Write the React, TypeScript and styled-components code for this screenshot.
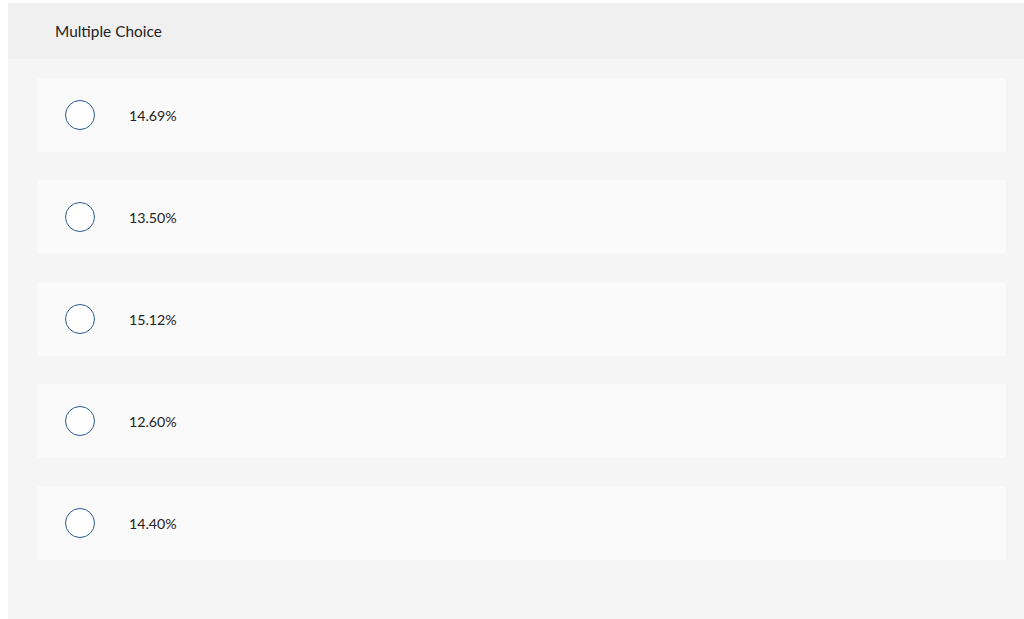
import React from "react";
import styled, { createGlobalStyle } from "styled-components";

const GlobalStyle = createGlobalStyle`
  html, body {
    margin: 0;
    padding: 0;
    background: #ffffff;
    font-family: Lato, "Open Sans", "Liberation Sans", sans-serif;
  }
`;

const Page = styled.div`
  padding: 3px 0 0 8px;
`;

const Panel = styled.div`
  background: #f5f5f5;
  height: 616px;
  display: flex;
  flex-direction: column;
`;

const Header = styled.div`
  height: 56px;
  background: #f0f0f0;
  display: flex;
  align-items: center;
  padding-left: 47px;
  font-size: 15.4px;
  color: #222222;
`;

const Choices = styled.div`
  display: flex;
  flex-direction: column;
  gap: 28px;
  padding: 19px 18px 0 29px;
`;

const Choice = styled.label`
  height: 74px;
  background: #fafafa;
  border-radius: 3px;
  display: flex;
  align-items: center;
  padding-left: 28px;
  gap: 34px;
  cursor: pointer;
`;

const Radio = styled.span`
  width: 28px;
  height: 28px;
  border-radius: 50%;
  border: 1.6px solid #2a5a90;
  background: #ffffff;
  flex-shrink: 0;
`;

const Label = styled.span`
  font-size: 14.2px;
  color: #222222;
`;

const options = ["14.69%", "13.50%", "15.12%", "12.60%", "14.40%"];

const App: React.FC = () => {
  return (
    <Page>
      <GlobalStyle />
      <Panel>
        <Header>Multiple Choice</Header>
        <Choices>
          {options.map((o) => (
            <Choice key={o}>
              <Radio />
              <Label>{o}</Label>
            </Choice>
          ))}
        </Choices>
      </Panel>
    </Page>
  );
};

export default App;
